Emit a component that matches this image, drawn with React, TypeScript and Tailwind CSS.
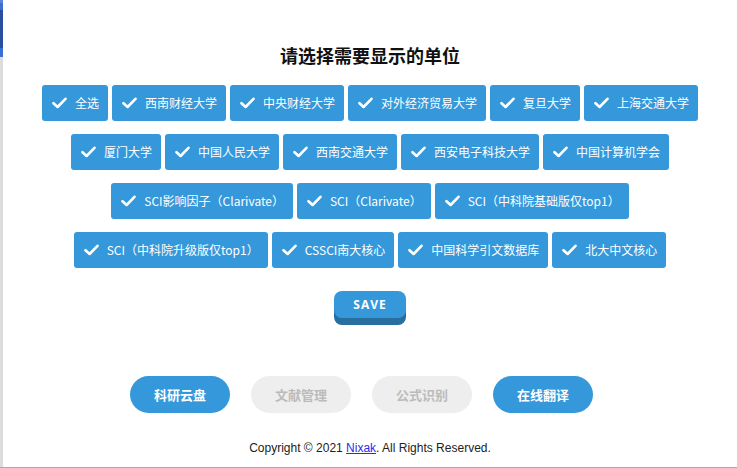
const rows: string[][] = [
  ["全选", "西南财经大学", "中央财经大学", "对外经济贸易大学", "复旦大学", "上海交通大学"],
  ["厦门大学", "中国人民大学", "西南交通大学", "西安电子科技大学", "中国计算机学会"],
  ["SCI影响因子（Clarivate）", "SCI（Clarivate）", "SCI（中科院基础版仅top1）"],
  ["SCI（中科院升级版仅top1）", "CSSCI南大核心", "中国科学引文数据库", "北大中文核心"],
];

const tools = [
  { name: "科研云盘", active: true },
  { name: "文献管理", active: false },
  { name: "公式识别", active: false },
  { name: "在线翻译", active: true },
];

function Check() {
  return (
    <svg width="15" height="12" viewBox="0 0 15 12" className="shrink-0">
      <path d="M1.5 6.2 L5.6 10 L13.5 1.8" fill="none" stroke="white" strokeWidth="2.6" strokeLinecap="round" strokeLinejoin="round" />
    </svg>
  );
}

export default function App() {
  return (
    <div className="flex h-[468px] w-[737px] border-b border-[#a9a9a9] bg-white font-['Noto_Sans_CJK_SC',sans-serif]">
      <div className="flex w-[3px] flex-col">
        <div className="h-[3px] bg-[#5b86d8]" />
        <div className="h-[7px] bg-[#3a6fd4]" />
        <div className="h-[38px] bg-[#2b4f9f]" />
        <div className="h-[9px] bg-[#3a6fd4]" />
        <div className="flex-1 bg-[#dcdcdc]" />
      </div>

      <div className="flex flex-1 flex-col items-center">
        <h1 className="pt-[43px] text-[18px] font-bold leading-[24px] text-[#111]">请选择需要显示的单位</h1>

        <div className="mt-[18px] flex flex-col items-center gap-[13px]">
          {rows.map((row, i) => (
            <div key={i} className="flex gap-[4px]">
              {row.map((label) => (
                <button
                  key={label}
                  className="flex h-[36px] items-center gap-[8px] rounded-[3px] bg-[#3498db] pl-[10px] pr-[9px] text-[12px] leading-none text-white"
                >
                  <Check />
                  <span>{label}</span>
                </button>
              ))}
            </div>
          ))}
        </div>

        <button className="mt-[23px] h-[27px] w-[72px] rounded-[8px] bg-[#3498db] text-[12px] font-bold tracking-[1px] text-white shadow-[0_7px_0_#286e9e] font-['Open_Sans',sans-serif]">
          SAVE
        </button>

        <div className="mt-[58px] flex gap-[21px] pr-[17px]">
          {tools.map((t) => (
            <button
              key={t.name}
              className={
                t.active
                  ? "h-[37px] w-[100px] rounded-full bg-[#3498db] text-[13px] font-bold text-white"
                  : "h-[37px] w-[100px] rounded-full bg-[#eeeeee] text-[13px] font-bold text-[#bbbbbb]"
              }
            >
              {t.name}
            </button>
          ))}
        </div>

        <p className="mt-[27px] font-['Liberation_Sans',sans-serif] text-[12px] leading-[16px] text-[#222]">
          Copyright © 2021 <a className="text-[#2a2aee] underline">Nixak</a>. All Rights Reserved.
        </p>
      </div>
    </div>
  );
}
